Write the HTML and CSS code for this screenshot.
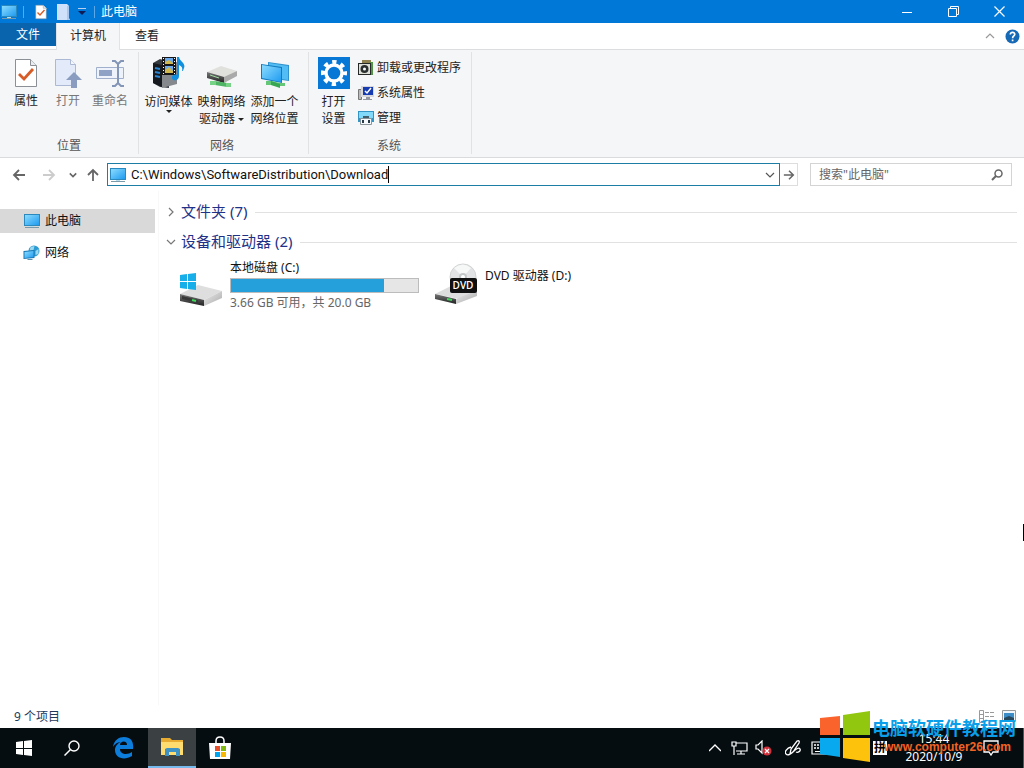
FILE: index.html
```html
<!DOCTYPE html>
<html lang="zh-CN">
<head>
<meta charset="utf-8">
<title>此电脑</title>
<link rel="stylesheet" href="styles.css">
</head>
<body>
<svg class="defs" aria-hidden="true">
  <defs>
    <linearGradient id="screen" x1="0" y1="0" x2="1" y2="1"><stop offset="0" stop-color="#8bdcff"/><stop offset="1" stop-color="#1f9bf0"/></linearGradient>
    <linearGradient id="metal" x1="0" y1="0" x2="1" y2="1"><stop offset="0" stop-color="#ececec"/><stop offset="1" stop-color="#aaa"/></linearGradient>
    <linearGradient id="dark" x1="0" y1="0" x2="0" y2="1"><stop offset="0" stop-color="#777"/><stop offset="1" stop-color="#222"/></linearGradient>
    <symbol id="pc" viewBox="0 0 18 16"><path fill="#2c89bd" d="M1 1h16v12H1z"/><path fill="url(#screen)" d="M2 2h14v10H2z"/><path fill="#b9dced" d="M7 13h4v1H7z"/><path fill="#789aaa" d="M2 14h14v1H2z"/></symbol>
    <symbol id="check" viewBox="0 0 24 32"><path fill="#fff" stroke="#8b9097" d="M1.500 2.500h15l6 6v21h-21z"/><path fill="#e9edf1" stroke="#8b9097" d="M16.500 2.500v6h6"/><path fill="none" stroke="#d65b26" stroke-width="2.800" d="m5 17 5 5 9-10"/></symbol>
    <symbol id="chev" viewBox="0 0 10 10"><path fill="none" stroke="currentColor" stroke-width="1.200" d="m1 3 4 4 4-4"/></symbol>
    <symbol id="arrow" viewBox="0 0 14 14"><path fill="none" stroke="currentColor" stroke-width="1.800" d="M13 7H2m5-5L2 7l5 5"/></symbol>
  </defs>
</svg>

<div class="window">
  <header class="titlebar">
    <svg class="i-pc" ><use href="#pc"/></svg>
    <span class="sep"></span>
    <button class="quick" aria-label="属性"><svg width="12" height="16"><use href="#check"/></svg></button>
    <button class="quick" aria-label="新建文件夹"><svg width="14" height="16" viewBox="0 0 14 16"><path fill="#cfe0fa" d="M0 0h10l2 2v12l1 2H0z"/><path fill="#a9c6ef" d="M10 2h2v14h-2z"/></svg></button>
    <button class="quick narrow" aria-label="自定义"><svg width="8" height="8" viewBox="0 0 8 8"><path fill="#b7cff0" d="M0 0h8v1H0z"/><path fill="#101a55" d="M0 3h8L4 7z"/></svg></button>
    <span class="sep"></span>
    <h1 class="title">此电脑</h1>
    <div class="controls">
      <button aria-label="最小化"><svg width="10" height="10"><path stroke="#fff" d="M0 5.500h10"/></svg></button>
      <button aria-label="还原"><svg width="11" height="11" viewBox="0 0 11 11"><path fill="none" stroke="#fff" d="M.5 2.500h8v8h-8zM2.500 2.500v-2h8v8h-2"/></svg></button>
      <button aria-label="关闭"><svg width="11" height="11" viewBox="0 0 11 11"><path stroke="#fff" stroke-width="1.200" d="m.5.500 10 10m0-10-10 10"/></svg></button>
    </div>
  </header>

  <nav class="tabs">
    <button class="tab file">文件</button>
    <button class="tab active">计算机</button>
    <button class="tab">查看</button>
    <div class="tab-tools">
      <button aria-label="折叠功能区"><svg class="flip" width="10" height="10"><use href="#chev"/></svg></button>
      <button aria-label="帮助"><svg width="15" height="15" viewBox="0 0 15 15"><circle cx="7.500" cy="7.500" r="7" fill="#1669b5"/><path fill="none" stroke="#fff" stroke-width="1.700" d="M5.300 5.500c0-3 4.600-2.600 4.400 0C9.600 7 7.600 7 7.600 9.200M7.600 10.500v1.700"/></svg></button>
    </div>
  </nav>

  <section class="ribbon">
    <div class="group place">
      <div class="tools">
        <button class="big"><svg width="24" height="32"><use href="#check"/></svg>属性</button>
        <button class="big" disabled><svg width="28" height="32" viewBox="0 0 28 32"><path fill="#e3eafa" stroke="#abb9d4" d="M1.500 2.500h15l5 5v21h-20z"/><path fill="#f4f7fd" stroke="#abb9d4" d="M16.500 2.500v5h5"/><path fill="#8a9dc0" d="m20 15 8 8h-5v8h-6v-8h-5z"/></svg>打开</button>
        <button class="big" disabled><svg width="30" height="32" viewBox="0 0 30 32"><path fill="#eef2fa" stroke="#a0afcb" d="M1.500 10.500h27v11h-27z"/><path fill="#8fa2c5" d="M4 13h13v6H4z"/><path fill="none" stroke="#8496b7" stroke-width="2" d="M17 4h3l3 3 3-3h3M23 6v21m-6 2h3l3-3 3 3h3"/></svg>重命名</button>
      </div>
      <h2>位置</h2>
    </div>
    <div class="group net">
      <div class="tools">
        <button class="big">
          <svg width="32" height="32" viewBox="0 0 32 32"><path fill="#363b42" d="m0 6 7-4 9 3v26l-9-1-7-4z"/><path fill="#16191e" d="m0 6 9 2v22l-9-4z"/><path fill="#85898e" d="m9 8 15-3v22l-15 4z"/><path stroke="#2787d4" stroke-width="2" d="m2 11 5 1m-5 3 5 1m-5 3 5 1"/><path fill="#171717" d="M9 0h14v18H9z"/><path fill="#69a9ec" d="M12 1h8v6h-8zM12 9h8v7h-8z"/><path fill="#d2b94f" d="m12 5 4-2 4 3v1h-8zM12 13l4-3 4 4v2h-8z"/><path stroke="#fff" stroke-dasharray="1 2" d="M10.500 1v16m11-16v16"/><path fill="#118fdf" d="M24 0h2c1 5 7 6 5 11-1 4-2 3-2 3 1-4-1-5-3-6v11c0 6-8 5-7 1 0-2 3-3 5-2z"/></svg>
          <span>访问媒体</span><i class="drop"></i>
        </button>
        <button class="big">
          <svg width="32" height="32" viewBox="0 0 32 32"><path fill="#e0e0dd" d="m1 15 14-6 16 5-13 7z"/><path fill="url(#dark)" d="m1 15 17 5v6L1 21z"/><path fill="#aaa" d="m18 20 13-6v5l-13 7z"/><path stroke="#9fdc9d" stroke-width="1" d="m4 18 9 3"/><path fill="#4db564" d="m9 24 12 2v4L9 28z"/><path fill="#76d385" d="M4 24h6v4H4zm16 2h5v4h-5z"/></svg>
          <span>映射网络<br>驱动器 <i class="drop"></i></span>
        </button>
        <button class="big">
          <svg width="30" height="32" viewBox="0 0 30 32"><path fill="#3093cd" d="m8 5 21 3v16L8 21z"/><path fill="#51bdf4" d="m9 6 19 3v14L9 20z"/><path fill="#137bbd" d="m1 7 21 3v16L1 22z"/><path fill="url(#screen)" d="m2 8 19 3v14L2 21z"/><path fill="#63c777" d="M6 24h5l9 2h5v3h-5l-9-1H6z"/><path fill="#39a654" d="m11 24 9 3v4l-9-3z"/></svg>
          <span>添加一个<br>网络位置</span>
        </button>
      </div>
      <h2>网络</h2>
    </div>
    <div class="group system">
      <div class="tools">
        <button class="big">
          <svg width="32" height="32" viewBox="0 0 32 32"><path fill="#0878d7" d="M0 0h32v32H0z"/><g fill="none" stroke="#fff"><circle cx="16" cy="16" r="11" stroke-width="4" stroke-dasharray="4.300 4.339" stroke-dashoffset="2.150"/><circle cx="16" cy="16" r="8" stroke-width="3.400"/></g></svg>
          <span>打开<br>设置</span>
        </button>
        <div class="small-list">
          <button class="small"><svg width="16" height="16" viewBox="0 0 16 16"><path fill="#8f8250" d="M4 0h9v4H4z"/><path fill="#529348" d="M12 2h3v13h-3z"/><path fill="#242927" d="M0 3h13v12H0z"/><path fill="#dedfd7" d="M1 4h11v10H1z"/><circle cx="6.500" cy="9" r="4" fill="#292e2f"/><circle cx="6.500" cy="9" r="1.500" fill="#fff"/></svg>卸载或更改程序</button>
          <button class="small"><svg width="16" height="16" viewBox="0 0 16 16"><path fill="#bbb" stroke="#777" d="M.5 4.500h3v10h-3z"/><path fill="#d7d7dc" d="M3 1h13v11H3z"/><path fill="#173bb0" d="M5 2h10v8H5z"/><path fill="none" stroke="#fff" stroke-width="1.500" d="m7 6 2 2 4-5"/><path fill="#9496a0" d="M8 12h4v2h2v1H5v-1h3z"/></svg>系统属性</button>
          <button class="small"><svg width="16" height="16" viewBox="0 0 16 16"><path fill="#3295c5" d="M0 1h16v11H0z"/><path fill="#82d9f9" d="M1 2h14v6H1z"/><path fill="#425d6b" d="M5 6h6v3H5z"/><path fill="#f7fafc" stroke="#8a9499" d="M2.500 8.500h11v6h-11z"/><path fill="#263b47" d="M4 10h2v3H4zm6 0h2v3h-2z"/></svg>管理</button>
        </div>
      </div>
      <h2>系统</h2>
    </div>
  </section>

  <div class="addressbar">
    <button class="nav" aria-label="后退"><svg width="14" height="14"><use href="#arrow"/></svg></button>
    <button class="nav faint" aria-label="前进"><svg class="flip" width="14" height="14"><use href="#arrow"/></svg></button>
    <button class="nav recent" aria-label="最近位置"><svg width="8" height="8" viewBox="0 0 10 10"><path fill="none" stroke="currentColor" stroke-width="2" d="m1 3 4 4 4-4"/></svg></button>
    <button class="nav up" aria-label="上移"><svg class="turn" width="14" height="14"><use href="#arrow"/></svg></button>
    <div class="address">
      <svg class="i-pc"><use href="#pc"/></svg>
      <input aria-label="地址" value="C:\Windows\SoftwareDistribution\Download"><span class="caret"></span>
      <button class="history" aria-label="历史记录"><svg width="10" height="10"><use href="#chev"/></svg></button>
    </div>
    <button class="go" aria-label="转到"><svg class="flip" width="12" height="12"><use href="#arrow"/></svg></button>
    <div class="search">
      <input type="text" aria-label="搜索" placeholder="搜索&quot;此电脑&quot;">
      <svg width="12" height="12" viewBox="0 0 12 12"><circle cx="7.500" cy="4.500" r="3.500" fill="none" stroke="#666" stroke-width="1.500"/><path stroke="#666" stroke-width="2" d="M5 7 1 11"/></svg>
    </div>
  </div>

  <div class="body">
    <nav class="tree">
      <a href="#" class="selected"><svg class="i-pc"><use href="#pc"/></svg>此电脑</a>
      <a href="#"><svg width="18" height="16" viewBox="0 0 17 16"><circle cx="10.500" cy="6" r="5.500" fill="#2b9bd4"/><path fill="#9bd7ed" d="m7 2 4-1-1 4-4 1zM12 6l3-2v5l-3 1z"/><path fill="#1978b5" d="m0 6 11-1v8l-11 1z"/><path fill="url(#screen)" d="m1 7 9-1v6l-9 1z"/><path fill="#5c91ae" d="M4 14h5v1H4z"/></svg>网络</a>
    </nav>
    <main class="content">
      <button class="section"><svg class="right" width="10" height="10"><use href="#chev"/></svg><span>文件夹 (7)</span></button>
      <button class="section"><svg width="10" height="10"><use href="#chev"/></svg><span>设备和驱动器 (2)</span></button>
      <div class="drives">
        <article class="drive">
          <svg width="44" height="48" viewBox="0 0 44 48"><path fill="#dedede" d="m1 34 18-9 24 6-18 9z"/><path fill="url(#dark)" d="m1 34 24 6v6L1 41z"/><path fill="url(#metal)" d="m25 40 18-9v7l-18 8z"/><path fill="#393939" d="m3 36 16 4v3L3 39z"/><path stroke="#40d65b" stroke-width="2" d="m13 40 4 1"/><path fill="#18aee9" d="m1 15 7-1v7H1zm8-1 8-1v8H9zm-8 8h7v7l-7-1zm8 0h8v8l-8-1z"/></svg>
          <div class="info"><h3>本地磁盘 (C:)</h3><div class="meter" role="img" aria-label="已用空间"><div class="used"></div></div><p>3.66 GB 可用，共 20.0 GB</p></div>
        </article>
        <article class="drive dvd">
          <svg width="44" height="48" viewBox="0 0 44 48"><circle cx="29" cy="17" r="13" fill="#e2e3e4" stroke="#d1d3d4"/><path fill="#f6f7f7" d="m29 17-9-9q9-7 17 0zM29 17l13 2q-2 9-9 10z"/><circle cx="29" cy="17" r="4" fill="#c4c7c9"/><circle cx="29" cy="17" r="2" fill="#fff"/><path fill="#ddd" d="m1 34 18-9 24 4-18 10z"/><path fill="url(#dark)" d="m1 34 21 5v5L1 39z"/><path fill="url(#metal)" d="m22 39 21-9v6l-21 8z"/><path stroke="#40d65b" stroke-width="2" d="m13 39 5 1"/><rect x="16" y="18" width="27" height="15" rx="2" fill="#101010"/><text x="29" y="29" class="dvd-text">DVD</text></svg>
          <div class="info"><h3>DVD 驱动器 (D:)</h3></div>
        </article>
      </div>
    </main>
  </div>
  <footer class="status">
    <span>9 个项目</span>
    <div class="views">
      <button aria-label="详细信息"><svg width="16" height="13" viewBox="0 0 16 13"><path fill="none" stroke="#999" d="M.5.500h4v12h-4zM.5 4.500h4m-4 4h4M6 2.500h4m1 0h4M6 6.500h4m1 0h4m-9 4h4m1 0h4"/></svg></button>
      <button aria-label="大图标"><svg width="14" height="13" viewBox="0 0 14 13"><path fill="#eef6fc" stroke="#999" d="M.5.500h13v11H.5z"/><path fill="#3c8cc8" d="M2 3h10v6H2z"/><path fill="#26465c" d="m2 8 5-2 5 2v2H2z"/></svg></button>
    </div>
  </footer>
</div>

<footer class="taskbar">
  <button class="task" aria-label="开始"><svg width="16" height="16" viewBox="0 0 16 16"><path fill="#fff" d="m0 2 7-1v7H0zm8-1 8-1v8H8zM0 9h7v6l-7-1zm8 0h8v7l-8-1z"/></svg></button>
  <button class="task" aria-label="搜索"><svg width="16" height="16" viewBox="0 0 16 16"><circle cx="10" cy="6" r="5" fill="none" stroke="#fff" stroke-width="1.400"/><path stroke="#fff" stroke-width="1.500" d="m6.500 9.500-6 6"/></svg></button>
  <button class="task edge" aria-label="Edge"><svg width="22" height="22" viewBox="0 0 22 22"><path fill="#0c7ddb" d="M1 10C2 3 7 0 12 0c7 0 10 5 9 12H8c0 6 8 6 12 3v4c-8 5-17 2-17-6 0-4 3-7 6-8-4 0-7 3-8 5zm7-2h7c0-5-7-4-7 0z"/></svg></button>
  <button class="task current" aria-label="文件资源管理器"><svg width="22" height="20" viewBox="0 0 22 20"><path fill="#e7ac31" d="M0 1h9l2 2h11v4H0z"/><path fill="#ffdc70" d="M0 5h22v13H0z"/><path fill="#3e92c4" d="M4 19v-7l2-1h11l2 1v7h-4v-4H8v4z"/></svg></button>
  <button class="task" aria-label="应用商店"><svg width="24" height="24" viewBox="0 0 24 24"><path fill="none" stroke="#fff" stroke-width="1.500" d="M8 8V5q0-4 4-4t4 4v3"/><path fill="#fff" d="M1 7h22l-1 16H2z"/><path fill="#e7502b" d="M7 10h5v5H7z"/><path fill="#7eb70e" d="M13 10h5v5h-5z"/><path fill="#00a4ef" d="M7 16h5v5H7z"/><path fill="#f6b800" d="M13 16h5v5h-5z"/></svg></button>
  <div class="tray">
    <button aria-label="显示隐藏的图标"><svg width="12" height="8" viewBox="0 0 12 8"><path fill="none" stroke="#fff" stroke-width="1.400" d="m0 7 6-6 6 6"/></svg></button>
    <button aria-label="网络"><svg width="17" height="16" viewBox="0 0 17 16"><path fill="none" stroke="#fff" stroke-width="1.200" d="M5 3h11v8H5M10 11v3m-4 0h8M1 2h4v4H1zm2 4v9"/></svg></button>
    <button aria-label="音量"><svg width="17" height="16" viewBox="0 0 17 16"><path fill="none" stroke="#fff" stroke-width="1.200" d="M1 5h2l4-4v12L3 9H1z"/><circle cx="12" cy="11" r="4.500" fill="#cf303a"/><path stroke="#fff" stroke-width="1.200" d="m10 9 4 4m0-4-4 4"/></svg></button>
    <button class="pen" aria-label="手写笔"><svg width="16" height="16" viewBox="0 0 16 16"><path fill="none" stroke="#fff" stroke-width="1.300" d="m5 14 1-5 6-8q3-1 2 2L8 12zM6 7C2 8-1 12 1 14s6-1 8-3 5-4 6-2-2 4-4 3"/></svg></button>
    <button class="keys" aria-label="触摸键盘"><svg width="16" height="14" viewBox="0 0 16 14"><path fill="none" stroke="#fff" stroke-width="1.200" d="M1 1h14v12H1z"/><path stroke="#fff" stroke-width="1.500" stroke-dasharray="2 1" d="M3 4h10M3 7h10"/><path stroke="#fff" d="M4 10.500h8"/></svg></button>
    <button class="ime" aria-label="拼音输入法">拼</button>
    <time class="clock">15:44<br>2020/10/9</time>
    <button class="notice" aria-label="操作中心"><svg width="16" height="16" viewBox="0 0 16 16"><path fill="none" stroke="#fff" stroke-width="1.300" d="M1 1h14v11h-5l-2 3-2-3H1z"/></svg></button>
    <span class="desktop"></span>
  </div>
</footer>

<div class="watermark">
  <svg width="50" height="52" viewBox="0 0 50 52"><path fill="#fa642c" d="m0 7 20-2v19H0z"/><path fill="#91c80f" d="m23 4 27-4v24H23z"/><path fill="#08a9ee" d="M0 27h20v19L0 43z"/><path fill="#fdc20b" d="M23 27h27v24l-27-4z"/></svg>
  <div><strong>电脑软硬件教程网</strong><b>www.computer26.com</b></div>
</div>
<span class="pointer"></span>
</body>
</html>
```
FILE: styles.css
```css
* { box-sizing: border-box; }
body {
  margin: 0;
  height: 100vh;
  display: flex;
  flex-direction: column;
  overflow: hidden;
  background: #fff;
  color: #222;
  font: 12px/16px "Noto Sans", "Noto Sans CJK SC", sans-serif;
}
button, input { font: inherit; color: inherit; border: 0; padding: 0; margin: 0; background: none; outline: 0; }
button { display: flex; align-items: center; justify-content: center; }
h1, h2, h3, p { margin: 0; font: inherit; }
svg { display: block; flex: none; }
.defs { position: absolute; width: 0; height: 0; }
.flip { transform: rotate(180deg); }
.turn { transform: rotate(90deg); }
.right { transform: rotate(-90deg); }
.i-pc { width: 18px; height: 16px; }

.window { flex: 1; min-height: 0; display: flex; flex-direction: column; }
.titlebar { display: flex; align-items: center; height: 23px; background: #0078d7; color: #fff; }
.sep { width: 1px; height: 12px; margin: 0 5px; background: #5ba9e8; }
.titlebar .quick { width: 23px; height: 23px; }
.titlebar .narrow { width: 14px; }
.titlebar .title { margin-left: 1px; }
.controls { display: flex; margin-left: auto; padding-right: 2px; }
.controls button { width: 46px; height: 20px; }

.tabs { display: flex; height: 27px; border-bottom: 1px solid #dcdddf; }
.tab { width: 54px; height: 25px; }
.tab.file { width: 56px; height: 23px; background: #0a64ad; color: #fff; }
.tab.active { width: 64px; height: 27px; padding-bottom: 2px; background: #f5f6f7; border: 1px solid #e2e3e4; border-width: 0 1px; }
.tab-tools { display: flex; gap: 10px; margin-left: auto; padding-right: 4px; color: #999; }

.ribbon { display: flex; height: 108px; background: #f5f6f7; border-bottom: 1px solid #dadbdc; padding: 2px 0 3px; }
.group { display: flex; flex-direction: column; border-right: 1px solid #e1e2e3; }
.group h2 { text-align: center; color: #555; margin-top: auto; }
.tools { display: flex; align-items: flex-start; }
.place { width: 139px; }
.place .tools { padding-left: 5px; }
.net { width: 170px; padding-right: 3px; }
.net .tools { padding-left: 3px; }
.system { width: 163px; padding-right: 2px; }
.system .tools { padding-left: 2px; }
.big { width: 42px; padding-top: 5px; flex-direction: column; white-space: nowrap; gap: 3px; line-height: 17px; }
.big:disabled { color: #777; }
.net .big { width: 53px; gap: 4px; }
.net .big > .drop { margin-top: -4px; }
.system .big { width: 45px; gap: 4px; }
.drop { display: inline-block; border: 3px solid transparent; border-top-color: #222; border-bottom: 0; vertical-align: middle; }
.small-list { display: flex; flex-direction: column; gap: 3px; padding: 5px 0 0 2px; }
.small { height: 22px; gap: 3px; justify-content: flex-start; }

.addressbar { display: flex; align-items: center; height: 33px; color: #666; padding: 0 12px 0 5px; }
.nav { width: 28px; height: 24px; }
.nav.faint { width: 32px; color: #ccc; }
.nav.recent { width: 15px; }
.nav.up { width: 27px; padding-right: 2px; }
.address { flex: 1; display: flex; align-items: center; height: 23px; border: 1px solid #1d7da5; color: #111; padding-left: 1px; }
.address input { margin-left: 4px; field-sizing: content; font: 13px/17px Roboto, "Noto Sans CJK SC", sans-serif; }
.caret { width: 1px; height: 17px; background: #000; }
.history { width: 18px; margin-left: auto; color: #555; }
.go { width: 18px; height: 23px; border: 1px solid #ddd; border-left: 0; }
.search { width: 202px; height: 23px; margin-left: 12px; display: flex; align-items: center; border: 1px solid #d4d4d4; padding: 0 8px; }
.search input { flex: 1; min-width: 0; }
.search input::placeholder { color: #666; opacity: 1; }

.body { flex: 1; min-height: 0; display: flex; }
.tree { width: 159px; padding: 18px 3px 0 0; border-right: 1px solid #f8f8f8; display: flex; flex-direction: column; gap: 8px; }
.tree a { display: flex; align-items: center; gap: 4px; height: 24px; padding-left: 23px; color: #111; text-decoration: none; }
.tree .selected { background: #d9d9d9; }
.content { flex: 1; padding: 6px 7px 0 7px; }
.section { display: flex; width: 100%; height: 30px; gap: 5px; font-size: 15px; color: #1e3287; }
.section span { padding: 0 3px 2px 0; }
.section svg { color: #777; }
.section::after { content: ""; flex: 1; height: 1px; background: #e1e1e1; }
.drives { display: flex; gap: 15px; padding-left: 13px; }
.drive { display: flex; gap: 7px; width: 240px; }
.drive svg { margin-top: 3px; }
.drive h3 { color: #111; }
.info { flex: 1; padding-top: 3px; }
.meter { height: 15px; margin: 2px 0; border: 1px solid #bcbcbc; background: #e6e6e6; }
.used { width: 82%; height: 100%; background: #26a0da; }
.drive p { color: #666; white-space: nowrap; }
.dvd .info { padding-top: 11px; }
.dvd-text { font: 600 10px "Open Sans", sans-serif; fill: #fff; text-anchor: middle; }
.status { display: flex; justify-content: space-between; align-items: center; height: 23px; padding: 0 8px 0 14px; color: #1e395b; }
.views { display: flex; gap: 7px; }

.taskbar { display: flex; height: 40px; background: #060d11; color: #fff; }
.task { width: 48px; height: 40px; }
.task.edge { width: 52px; padding-left: 2px; }
.task.current { background: #3b4043; border-bottom: 2px solid #76b9ed; }
.tray { display: flex; align-items: center; margin-left: auto; }
.tray button { width: 24px; height: 40px; }
.tray .pen { width: 35px; }
.tray .keys { width: 18px; }
.tray .ime { width: 14px; height: 14px; margin-left: 45px; background: #fff; color: #000; font-weight: bold; }
.clock { width: 94px; text-align: center; line-height: 18px; }
.tray .notice { width: 20px; }
.desktop { width: 23px; height: 40px; border-right: 1px solid #555; }
.watermark { position: absolute; right: 8px; bottom: 5px; display: flex; gap: 2px; pointer-events: none; white-space: nowrap; }
.watermark strong, .watermark b { display: block; }
.watermark strong { font: bold 18px/20px "Noto Sans CJK SC", sans-serif; color: #0a9fe8; padding-top: 6px; }
.watermark b { font: bold 12px/20px "Liberation Sans", Arial, sans-serif; color: #f26324; padding-left: 12px; }
.pointer { position: absolute; right: 0; top: 524px; width: 1px; height: 17px; background: #000; }
```
